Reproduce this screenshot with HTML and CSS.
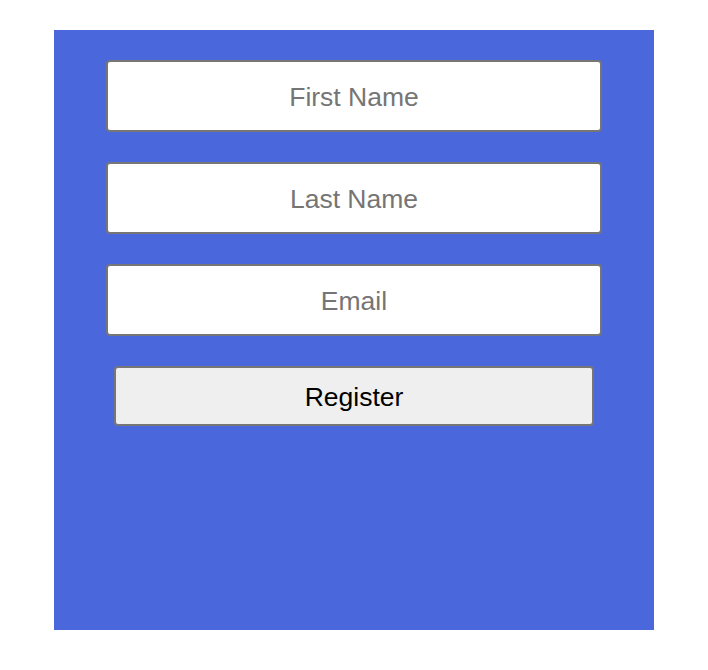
FILE: index.html
```html
<!DOCTYPE html>
<html>
<head>
<meta charset="utf-8">
<link rel="stylesheet" href="styles.css">
</head>
<body>
<div class="panel">
  <form class="form">
    <input class="field" type="text" placeholder="First Name">
    <input class="field" type="text" placeholder="Last Name">
    <input class="field" type="email" placeholder="Email">
    <button class="btn" type="button">Register</button>
  </form>
</div>
</body>
</html>
```

FILE: styles.css
```css
html, body {
  margin: 0;
  padding: 0;
  background: #ffffff;
}
.panel {
  width: 600px;
  height: 600px;
  margin: 30px auto 0;
  background: #4a68db;
  box-sizing: border-box;
  padding-top: 30px;
}
.form {
  display: flex;
  flex-direction: column;
  align-items: center;
  gap: 30px;
  margin: 0;
}
.field {
  box-sizing: border-box;
  width: 496px;
  height: 72px;
  border: 2px solid #767676;
  border-radius: 4px;
  background: #ffffff;
  font-family: "Liberation Sans", Arial, sans-serif;
  font-size: 26.5px;
  text-align: center;
  color: #000;
  padding: 2px 8px 0;
  outline: none;
}
.field::placeholder {
  color: #757575;
  opacity: 1;
}
.btn {
  box-sizing: border-box;
  width: 480px;
  height: 60px;
  border: 2px solid #767676;
  border-radius: 4px;
  background: #efefef;
  color: #000;
  font-family: "Liberation Sans", Arial, sans-serif;
  font-size: 26.5px;
  padding: 2px 0 0;
}
```
